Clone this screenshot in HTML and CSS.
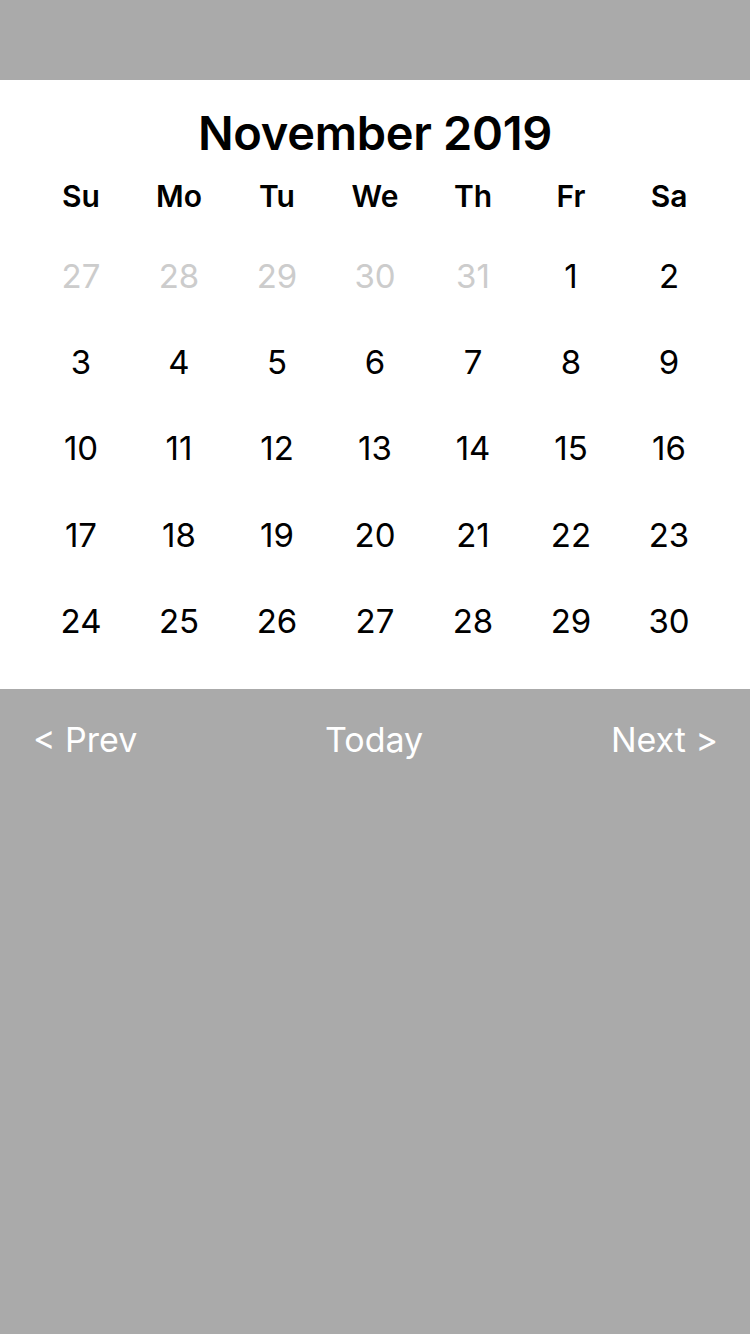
FILE: index.html
```html
<!DOCTYPE html>
<html>
<head>
<meta charset="utf-8">
<link rel="stylesheet" href="styles.css">
</head>
<body>
<div class="screen">
  <div class="topband"></div>
  <section class="calendar">
    <h1 class="title">November 2019</h1>
    <div class="weekdays">
      <div>Su</div><div>Mo</div><div>Tu</div><div>We</div><div>Th</div><div>Fr</div><div>Sa</div>
    </div>
    <div class="days">
      <div class="day muted">27</div><div class="day muted">28</div><div class="day muted">29</div><div class="day muted">30</div><div class="day muted">31</div><div class="day">1</div><div class="day">2</div>
      <div class="day">3</div><div class="day">4</div><div class="day">5</div><div class="day">6</div><div class="day">7</div><div class="day">8</div><div class="day">9</div>
      <div class="day">10</div><div class="day">11</div><div class="day">12</div><div class="day">13</div><div class="day">14</div><div class="day">15</div><div class="day">16</div>
      <div class="day">17</div><div class="day">18</div><div class="day">19</div><div class="day">20</div><div class="day">21</div><div class="day">22</div><div class="day">23</div>
      <div class="day">24</div><div class="day">25</div><div class="day">26</div><div class="day">27</div><div class="day">28</div><div class="day">29</div><div class="day">30</div>
    </div>
  </section>
  <nav class="nav">
    <span class="nav-btn">&lt; Prev</span>
    <span class="nav-btn">Today</span>
    <span class="nav-btn">Next &gt;</span>
  </nav>
</div>
</body>
</html>
```

FILE: styles.css
```css
html, body {
  margin: 0;
  padding: 0;
}
body {
  background: #aaaaaa;
  font-family: Inter, "Liberation Sans", Arial, sans-serif;
  width: 750px;
  height: 1334px;
  overflow: hidden;
}
.screen {
  display: flex;
  flex-direction: column;
}
.topband {
  height: 80px;
}
.calendar {
  background: #ffffff;
  padding: 25px 32px 25px;
}
.title {
  margin: 0;
  text-align: center;
  font-size: 47px;
  font-weight: 600;
  letter-spacing: -0.3px;
  line-height: 56px;
  color: #000;
}
.weekdays {
  display: grid;
  grid-template-columns: repeat(7, 1fr);
  height: 70px;
  margin-bottom: 2px;
  align-items: center;
  text-align: center;
  font-size: 30px;
  font-weight: 600;
  color: #000;
}
.days {
  display: grid;
  grid-template-columns: repeat(7, 1fr);
  grid-auto-rows: 86.2px;
  align-items: center;
  text-align: center;
}
.day {
  font-size: 33px;
  color: #000;
}
.day.muted {
  color: #cccccc;
}
.nav {
  display: flex;
  justify-content: space-between;
  align-items: center;
  height: 102px;
  padding: 0 32px 0 33px;
}
.nav-btn {
  color: #ffffff;
  font-size: 34px;
}
```
